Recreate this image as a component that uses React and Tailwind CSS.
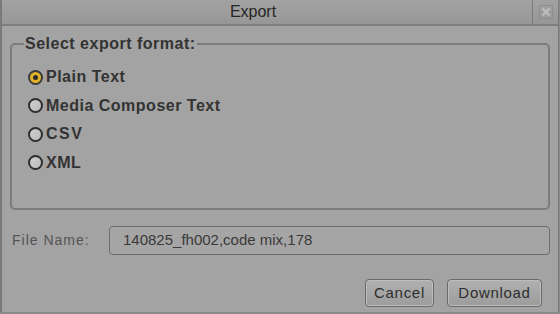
export default function App() {
  const formats = ["Plain Text", "Media Composer Text", "CSV", "XML"];
  const selected = "Plain Text";

  return (
    <div className="h-[314px] w-[560px] overflow-hidden bg-[#8a8a8a] font-['Liberation_Sans',Arial,sans-serif]">
      <div className="flex h-[312px] w-[559px] flex-col border-l-2 border-r border-[#7a7a7a] bg-[#a3a3a3]">
        {/* title bar */}
        <header className="flex h-[26px] shrink-0 items-center border-b-2 border-[#7e7e7e] bg-gradient-to-b from-[#a2a2a2] to-[#979797]">
          <h1 className="flex-1 pr-[28px] text-center text-[16px] leading-none text-[#262626]">Export</h1>
          <div className="flex h-full w-[26px] items-center justify-center border-l border-[#7a7a7a]">
            <svg width="14" height="14" viewBox="0 0 14 14">
              <rect x="0.5" y="0.5" width="13" height="13" fill="none" stroke="#8e8e8e" />
              <path d="M3.5 3.5 L10.5 10.5 M10.5 3.5 L3.5 10.5" stroke="#bdbdbd" strokeWidth="2.2" />
            </svg>
          </div>
        </header>

        <div className="flex flex-1 flex-col px-[8px] pt-[10px]">
          {/* group box */}
          <fieldset className="h-[174px] rounded-[5px] border-2 border-[#7c7c7c] px-[16px]">
            <legend className="ml-[-4px] px-[1px] text-[16px] font-bold leading-none tracking-[0.5px] text-[#333]">
              Select export format:
            </legend>
            <div className="mt-[16px] flex flex-col gap-[10.5px]">
              {formats.map((f) => (
                <label key={f} className="flex h-[18px] items-center gap-[3px] text-[16px] font-bold tracking-[0.5px] text-[#333]">
                  {f === selected ? (
                    <span className="flex h-[15px] w-[15px] items-center justify-center rounded-full border-2 border-[#3a3a3a] bg-[#e0b22a]">
                      <span className="h-[5px] w-[5px] rounded-full bg-[#2a2a2a]" />
                    </span>
                  ) : (
                    <span className="h-[15px] w-[15px] rounded-full border-2 border-[#2e2e2e] bg-gradient-to-br from-[#cfcfcf] to-[#bcbcbc]" />
                  )}
                  <span className={f === "CSV" ? "tracking-[1.5px]" : ""}>{f}</span>
                </label>
              ))}
            </div>
          </fieldset>

          {/* file name */}
          <div className="mt-[16px] flex items-center">
            <span className="w-[99px] pl-[2px] text-[14px] tracking-[1px] text-[#555]">File Name:</span>
            <div className="flex h-[29px] flex-1 items-center rounded-[4px] border border-[#6e6e6e] bg-[#a5a5a5] pl-[13px] text-[15px] text-[#3a3a3a]">
              140825_fh002,code mix,178
            </div>
          </div>

          {/* buttons */}
          <div className="mt-[24px] flex justify-end gap-[13px] pr-[8px]">
            <button className="h-[28px] w-[69px] rounded-[4px] border border-[#6a6a6a] bg-gradient-to-b from-[#b0b0b0] to-[#9c9c9c] text-[15px] tracking-[0.7px] text-[#2e2e2e] shadow-[inset_0_0_0_1px_#bdbdbd]">
              Cancel
            </button>
            <button className="h-[28px] w-[95px] rounded-[4px] border border-[#6a6a6a] bg-gradient-to-b from-[#b0b0b0] to-[#9c9c9c] text-[15px] tracking-[0.7px] text-[#2e2e2e] shadow-[inset_0_0_0_1px_#bdbdbd]">
              Download
            </button>
          </div>
        </div>
      </div>
    </div>
  );
}
